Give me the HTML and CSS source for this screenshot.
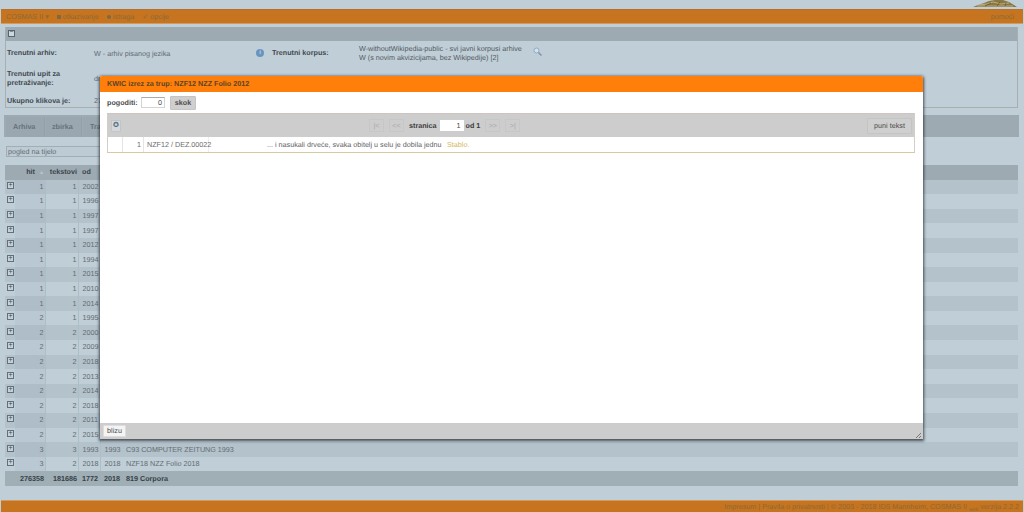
FILE: index.html
```html
<!DOCTYPE html>
<html lang="hr">
<head>
<meta charset="utf-8">
<title>COSMAS II</title>
<link rel="stylesheet" href="styles.css">
</head>
<body>
<div class="page">
  <div class="logo-strip">
    <svg class="logo" width="44" height="7" viewBox="0 0 44 7"><path d="M0 7 L5 5 L11 3 L16 1 L22 0 L30 0 L36 2 L41 5 L44 7 Z" fill="#8b7744"/><path d="M6 5 L14 4 L20 2 L28 4 L36 3 M4 6 L40 6" stroke="#cfc59c" stroke-width=".7" fill="none"/><path d="M12 6 L18 3 M24 6 L27 2 M32 6 L33 3" stroke="#5c4d28" stroke-width=".7" fill="none"/></svg>
  </div>
  <nav class="navbar">
    <div class="nav-left">
      <span>COSMAS II ▾</span>
      <span><i class="dot square"></i>otkazivanje</span>
      <span><i class="dot"></i>istraga</span>
      <span>✓ opcije</span>
    </div>
    <span>pomoći</span>
  </nav>
  <section class="panel">
    <div class="panel-head"><span class="toggle">−</span></div>
    <div class="panel-body">
      <div class="info-row row-a">
        <b class="lbl">Trenutni arhiv:</b>
        <span class="val arch">W - arhiv pisanog jezika</span>
        <span class="info-ico">i</span>
        <b class="lbl">Trenutni korpus:</b>
        <span class="val corp">W-withoutWikipedia-public - svi javni korpusi arhive<br>W (s novim akvizicijama, bez Wikipedije) [2]</span>
        <svg class="lens" width="9" height="9" viewBox="0 0 9 9"><circle cx="3.5" cy="3.5" r="2.5" fill="#d5e2ee" stroke="#8fabc4"/><path d="M5.5 5.5 L8.5 8.5" stroke="#7f92a6" stroke-width="1.5"/></svg>
      </div>
      <div class="info-row row-b">
        <b class="lbl">Trenutni upit za pretraživanje:</b>
        <span class="val">drveće</span>
      </div>
      <div class="info-row row-c">
        <b class="lbl">Ukupno klikova je:</b>
        <span class="val">276358</span>
      </div>
    </div>
  </section>
  <div class="tabs">
    <span class="tab">Arhiva</span>
    <span class="tab">zbirka</span>
    <span class="tab">Traži</span>
  </div>
  <div class="select-row"><span class="select">pogled na tijelo</span></div>
  <table class="data">
    <thead>
      <tr><th class="c0"></th><th class="c1">hit <span class="sort">▴</span></th><th class="c2">tekstovi</th><th class="c3">od</th><th class="c4">do</th><th class="c5"></th></tr>
    </thead>
    <tbody>
      <tr><td class="c0"><i class="plus">+</i></td><td class="c1">1</td><td class="c2">1</td><td class="c3">2002</td><td class="c4">2002</td><td class="c5"></td></tr>
      <tr><td class="c0"><i class="plus">+</i></td><td class="c1">1</td><td class="c2">1</td><td class="c3">1996</td><td class="c4">1996</td><td class="c5"></td></tr>
      <tr><td class="c0"><i class="plus">+</i></td><td class="c1">1</td><td class="c2">1</td><td class="c3">1997</td><td class="c4">1997</td><td class="c5"></td></tr>
      <tr><td class="c0"><i class="plus">+</i></td><td class="c1">1</td><td class="c2">1</td><td class="c3">1997</td><td class="c4">1997</td><td class="c5"></td></tr>
      <tr><td class="c0"><i class="plus">+</i></td><td class="c1">1</td><td class="c2">1</td><td class="c3">2012</td><td class="c4">2012</td><td class="c5"></td></tr>
      <tr><td class="c0"><i class="plus">+</i></td><td class="c1">1</td><td class="c2">1</td><td class="c3">1994</td><td class="c4">1994</td><td class="c5"></td></tr>
      <tr><td class="c0"><i class="plus">+</i></td><td class="c1">1</td><td class="c2">1</td><td class="c3">2015</td><td class="c4">2015</td><td class="c5"></td></tr>
      <tr><td class="c0"><i class="plus">+</i></td><td class="c1">1</td><td class="c2">1</td><td class="c3">2010</td><td class="c4">2010</td><td class="c5"></td></tr>
      <tr><td class="c0"><i class="plus">+</i></td><td class="c1">1</td><td class="c2">1</td><td class="c3">2014</td><td class="c4">2014</td><td class="c5"></td></tr>
      <tr><td class="c0"><i class="plus">+</i></td><td class="c1">2</td><td class="c2">1</td><td class="c3">1995</td><td class="c4">1995</td><td class="c5"></td></tr>
      <tr><td class="c0"><i class="plus">+</i></td><td class="c1">2</td><td class="c2">2</td><td class="c3">2000</td><td class="c4">2000</td><td class="c5"></td></tr>
      <tr><td class="c0"><i class="plus">+</i></td><td class="c1">2</td><td class="c2">2</td><td class="c3">2009</td><td class="c4">2009</td><td class="c5"></td></tr>
      <tr><td class="c0"><i class="plus">+</i></td><td class="c1">2</td><td class="c2">2</td><td class="c3">2018</td><td class="c4">2018</td><td class="c5"></td></tr>
      <tr><td class="c0"><i class="plus">+</i></td><td class="c1">2</td><td class="c2">2</td><td class="c3">2013</td><td class="c4">2013</td><td class="c5"></td></tr>
      <tr><td class="c0"><i class="plus">+</i></td><td class="c1">2</td><td class="c2">2</td><td class="c3">2014</td><td class="c4">2014</td><td class="c5"></td></tr>
      <tr><td class="c0"><i class="plus">+</i></td><td class="c1">2</td><td class="c2">2</td><td class="c3">2018</td><td class="c4">2018</td><td class="c5"></td></tr>
      <tr><td class="c0"><i class="plus">+</i></td><td class="c1">2</td><td class="c2">2</td><td class="c3">2011</td><td class="c4">2011</td><td class="c5"></td></tr>
      <tr><td class="c0"><i class="plus">+</i></td><td class="c1">2</td><td class="c2">2</td><td class="c3">2015</td><td class="c4">2015</td><td class="c5"></td></tr>
      <tr><td class="c0"><i class="plus">+</i></td><td class="c1">3</td><td class="c2">3</td><td class="c3">1993</td><td class="c4">1993</td><td class="c5">C93 COMPUTER ZEITUNG 1993</td></tr>
      <tr><td class="c0"><i class="plus">+</i></td><td class="c1">3</td><td class="c2">2</td><td class="c3">2018</td><td class="c4">2018</td><td class="c5">NZF18 NZZ Folio 2018</td></tr>
    </tbody>
    <tfoot>
      <tr><td class="c0"></td><td class="c1">276358</td><td class="c2">181686</td><td class="c3">1772</td><td class="c4">2018</td><td class="c5">819 Corpora</td></tr>
    </tfoot>
  </table>
  <footer class="footer">Impresum | Pravila o privatnosti | © 2003 - 2018 IDS Mannheim, COSMAS II <sub>web</sub> verzija 2.2.2</footer>
</div>

<div class="dialog">
  <div class="dlg-title">KWIC izrez za trup: NZF12 NZZ Folio 2012</div>
  <div class="dlg-body">
    <div class="jump">
      <b>pogoditi:</b>
      <span class="input">0</span>
      <span class="btn jump-btn">skok</span>
    </div>
    <div class="kwic">
      <div class="kwic-bar">
        <span class="btn cog">✪</span>
        <div class="pager">
          <span class="pg">|&lt;</span>
          <span class="pg">&lt;&lt;</span>
          <b>stranica</b>
          <span class="input page-input">1</span>
          <b>od 1</b>
          <span class="pg">&gt;&gt;</span>
          <span class="pg">&gt;|</span>
        </div>
        <span class="btn full">puni tekst</span>
      </div>
      <div class="kwic-row">
        <span class="k0"></span>
        <span class="k1">1</span>
        <span class="k2">NZF12 / DEZ.00022</span>
        <span class="k3">... i nasukali drveće, svaka obitelj u selu je dobila jednu</span>
        <span class="k4">Stablo.</span>
      </div>
    </div>
  </div>
  <div class="dlg-foot">
    <span class="btn close">blizu</span>
    <svg class="grip" width="6" height="6" viewBox="0 0 6 6"><path d="M1 6 L6 1 M4 6 L6 4" stroke="#777" fill="none"/></svg>
  </div>
</div>
</body>
</html>
```
FILE: styles.css
```css
* { box-sizing: border-box; }
html, body { margin: 0; height: 512px; overflow: hidden; }
body {
  background: #c0ced8;
  font-family: "Liberation Sans", Arial, sans-serif;
  font-size: 7.2px;
  color: #3e4549;
  position: relative;
  text-rendering: geometricPrecision;
}
.page { width: 1024px; height: 512px; display: flex; flex-direction: column; }

.logo-strip { height: 10px; display: flex; justify-content: flex-end; align-items: flex-start; }
.logo { margin-right: 7px; }

.navbar {
  margin: 0 1px;
  height: 16px;
  background: #c6741f;
  border-top: 1px solid #b5712d;
  border-bottom: 1px solid #d19a5e;
  display: flex;
  justify-content: space-between;
  align-items: center;
  padding: 0 9px 0 5px;
  color: #8a6a3a;
}
.nav-left { display: flex; gap: 8px; }
.dot { display: inline-block; width: 4px; height: 4px; border-radius: 50%; background: #7d6a43; margin-right: 2px; vertical-align: 0; }
.dot.square { border-radius: 0; }

.panel {
  margin: 3px 6px 0 5px;
  height: 81px;
  border: 1px solid #a9aeae;
  border-top: 0;
}
.panel-head { height: 14px; background: #9daab2; display: flex; align-items: center; padding-left: 2px; }
.toggle {
  width: 7px; height: 7px; border: 1px solid #55666f; background: #ccd7df;
  font-size: 7px; line-height: 4px; text-align: center; color: #3c474e; display: block;
}
.panel-body { display: flex; flex-direction: column; padding: 2px 1px 0; }
.info-row { display: flex; align-items: center; }
.row-a { height: 21px; }
.row-b { height: 30px; }
.row-c { height: 14px; }
.lbl { width: 87px; flex: none; line-height: 8.5px; color: #424a4f; }
.val { color: #626a70; line-height: 9.5px; }
.arch { width: 162px; flex: none; }
.info-ico {
  width: 8px; height: 8px; border-radius: 50%; background: #6a94bf; color: #c3d4e3; flex: none;
  font-size: 6px; line-height: 8px; text-align: center; font-weight: bold; margin-right: 8px;
}
.corp { width: 174px; flex: none; color: #525a60; white-space: nowrap; }
.lens { flex: none; margin-top: -3px; }

.tabs {
  margin: 7px 5px 0 4px;
  height: 22px;
  background: #9daab2;
  display: flex;
  padding: 2px 0 0 2px;
  gap: 1px;
}
.tab { padding: 0 7px; height: 20px; line-height: 20px; color: #66727b; font-weight: bold; background: #9aa7b0; border-right: 1px solid #92a0a9; }
.tab:first-child { width: 39px; }
.tab:nth-child(2) { width: 36px; padding-left: 6px; }

.select-row { margin: 9px 0 0 6px; height: 11px; }
.select { display: block; width: 96px; height: 11px; line-height: 9px; padding-left: 1px; background: #bdcbd5; border: 1px solid #a2aeb6; color: #646c72; }

.data {
  margin: 8px 6px 0 5px;
  width: 1013px;
  border-collapse: collapse;
  table-layout: fixed;
  height: 320px;
  color: #656d73;
}
.data th, .data td { padding: 0; height: 14.6px; line-height: 10px; font-weight: normal; border: 0; white-space: nowrap; overflow: hidden; }
.data thead tr { background: #9daab2; height: 14px; }
.data .c1, .data .c2 { padding-right: 1px; }
.data .c3, .data .c4, .data .c5 { padding-left: 4px; }
.data .c0 { padding-left: 2px; }
.data th { font-weight: bold; color: #3a454c; }
.data tbody tr:nth-child(odd) { background: #b3c2cb; }
.data tbody tr:nth-child(even) { background: #bfced7; }
.data tfoot tr { background: #a0aeb6; }
.data tfoot td { font-weight: bold; color: #374249; }
.c0 { width: 10px; }
.c1 { width: 30px; text-align: right; }
.c2 { width: 33px; text-align: right; }
.c3 { width: 22px; text-align: left; }
.c4 { width: 22px; text-align: left; }
.c5 { text-align: left; }
.data tbody .c1, .data tbody .c2, .data tbody .c3 { border-right: 1px solid #aebdc6; }
.data tbody .c1 { background: rgba(60, 80, 90, .04); }
.sort { color: #b7c4cc; font-size: 6px; margin: 0 1px 0 3px; }
.plus {
  display: block; width: 7px; height: 7px; border: 1px solid #647079; background: #c5d2da; margin-top: -3px;
  font-style: normal; font-size: 7px; line-height: 5px; text-align: center; color: #3c464c; overflow: hidden;
}

.footer {
  margin: 14px 1px 0 1px;
  height: 12px;
  background: #c6741f;
  border-top: 1px solid #d19a5e;
  text-align: right;
  padding: 1px 4px 0 0;
  color: #8a6a3a;
  line-height: 10px;
  white-space: nowrap;
}
.footer sub { font-size: 5px; line-height: 0; }

.dialog {
  position: absolute;
  left: 100px;
  top: 76px;
  width: 823px;
  height: 363px;
  background: #fff;
  display: flex;
  flex-direction: column;
  box-shadow: 0 1px 3px 1px rgba(30, 35, 40, .75);
  border-radius: 2px 2px 0 0;
}
.dlg-title { height: 16px; background: #ff7f0a; color: #5a4526; font-weight: bold; line-height: 16px; padding-left: 7px; flex: none; border-radius: 2px 2px 0 0; }
.dlg-body { flex: 1; padding: 0 8px 0 7px; }
.jump { display: flex; align-items: center; height: 21px; color: #4c4c4c; }
.jump b { width: 34px; flex: none; }
.input { display: block; background: #fff; border: 1px solid #d4d4d4; border-top-color: #aaa; text-align: right; padding-right: 2px; color: #4c4c4c; }
.jump .input { width: 24px; height: 11px; line-height: 9px; }
.btn { display: block; background: #cfcfcf; border: 1px solid #c4c4c4; color: #4c4c4c; text-align: center; border-radius: 1px; }
.jump-btn { width: 26px; height: 14px; line-height: 12px; font-weight: bold; margin-left: 5px; }
.kwic { border: 1px solid #d4cfc2; border-top-color: #d0c4c2; border-bottom-color: #d9c9a3; }
.kwic-bar { height: 23px; background: #cdcdcd; display: flex; align-items: center; padding: 0 2px 0 3px; }
.cog { width: 10px; height: 12px; line-height: 10px; font-size: 7px; background: #d4d8dc; color: #4b6a7d; flex: none; }
.pager { display: flex; align-items: center; gap: 5px; color: #3c3c3c; margin-left: 248px; }
.pg { width: 15px; text-align: center; color: #a8a8a8; height: 13px; line-height: 12px; border: 1px solid #c7c7c7; }
.page-input { width: 24px; height: 11px; line-height: 9px; border-color: #fff; margin: 0 -3px 0 -2px; }
.full { width: 45px; height: 16px; line-height: 14px; margin-left: auto; }
.kwic-row { height: 15px; display: flex; align-items: center; background: #fff; color: #6c6c6c; }
.k0 { width: 15px; height: 100%; border-right: 1px solid #e5e5e5; flex: none; }
.k1 { width: 21px; height: 100%; line-height: 15px; text-align: right; padding-right: 2px; border-right: 1px solid #e5e5e5; flex: none; }
.k2 { width: 65px; height: 100%; line-height: 15px; padding-left: 3px; flex: none; border-right: 1px solid #eee; white-space: nowrap; }
.k3 { width: 238px; padding-left: 58px; flex: none; color: #636363; white-space: nowrap; }
.k4 { color: #d6b65e; }
.dlg-foot { height: 16px; background: #cdcdcd; flex: none; display: flex; align-items: center; justify-content: space-between; padding: 0 2px 0 3px; }
.close { width: 23px; height: 12px; line-height: 10px; background: #f4f4f4; border-color: #ddd; }
.grip { align-self: flex-end; margin-bottom: 1px; }
```
